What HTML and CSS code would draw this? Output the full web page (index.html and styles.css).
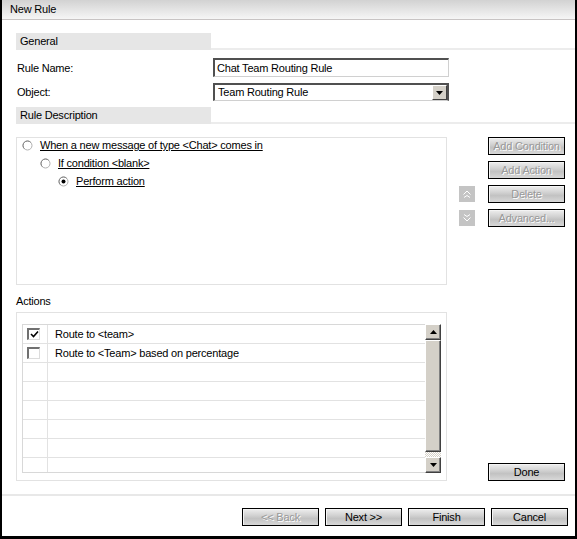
FILE: index.html
```html
<!DOCTYPE html>
<html>
<head>
<meta charset="utf-8">
<title>New Rule</title>
<link rel="stylesheet" href="styles.css">
</head>
<body>
<div class="window">
  <div class="titlebar">New Rule</div>
  <div class="content">
    <div class="section-head"><span class="section-label">General</span><span class="section-fill"></span></div>
    <div class="field-row row-name">
      <span class="field-label">Rule Name:</span>
      <div class="textbox">Chat Team Routing Rule</div>
    </div>
    <div class="field-row row-object">
      <span class="field-label">Object:</span>
      <div class="combo">
        <span class="combo-text">Team Routing Rule</span>
        <span class="combo-btn"><svg width="7" height="4" viewBox="0 0 7 4"><path d="M0 0H7L3.5 4Z" fill="#000"/></svg></span>
      </div>
    </div>
    <div class="section-head head-desc"><span class="section-label">Rule Description</span><span class="section-fill"></span></div>

    <div class="desc-row">
      <div class="desc-box">
        <div class="tree">
          <div class="tree-item lvl0">
            <svg class="radio" width="11" height="11" viewBox="0 0 11 11"><circle cx="5.5" cy="5.5" r="4.5" fill="#fff" stroke="#b0b0b0"/><path d="M2.3 8.7A4.5 4.5 0 0 1 8.7 2.3" fill="none" stroke="#808080"/></svg>
            <span class="tree-text">When a new message of type &lt;Chat&gt; comes in</span>
          </div>
          <div class="tree-item lvl1">
            <svg class="radio" width="11" height="11" viewBox="0 0 11 11"><circle cx="5.5" cy="5.5" r="4.5" fill="#fff" stroke="#b0b0b0"/><path d="M2.3 8.7A4.5 4.5 0 0 1 8.7 2.3" fill="none" stroke="#808080"/></svg>
            <span class="tree-text">If condition &lt;blank&gt;</span>
          </div>
          <div class="tree-item lvl2">
            <svg class="radio" width="11" height="11" viewBox="0 0 11 11"><circle cx="5.5" cy="5.5" r="4.5" fill="#fff" stroke="#b0b0b0"/><path d="M2.3 8.7A4.5 4.5 0 0 1 8.7 2.3" fill="none" stroke="#808080"/><circle cx="5.5" cy="5.5" r="2" fill="#000"/></svg>
            <span class="tree-text">Perform action</span>
          </div>
        </div>
      </div>
      <div class="arrows">
        <span class="arrow-btn"><svg width="16" height="16" viewBox="0 0 16 16"><path d="M4.5 8.5L8 5L11.5 8.5M5 11.5L8 9.5L11 11.5" fill="none" stroke="#fff" stroke-width="1"/></svg></span>
        <span class="arrow-btn"><svg width="16" height="16" viewBox="0 0 16 16"><path d="M5 4.5L8 6.5L11 4.5M4.5 7.5L8 11L11.5 7.5" fill="none" stroke="#fff" stroke-width="1"/></svg></span>
      </div>
      <div class="btn-col">
        <button class="btn disabled">Add Condition</button>
        <button class="btn disabled">Add Action</button>
        <button class="btn disabled">Delete</button>
        <button class="btn disabled">Advanced...</button>
      </div>
    </div>

    <div class="actions-label">Actions</div>
    <div class="actions-row">
      <div class="actions-box">
        <div class="grid-wrap">
          <div class="list">
            <div class="list-row"><span class="check-cell"><span class="checkbox"><svg width="9" height="9" viewBox="0 0 9 9"><path d="M1 4L3.5 6.5L8 1.5" fill="none" stroke="#000" stroke-width="1.6"/></svg></span></span><span class="text-cell">Route to &lt;team&gt;</span></div>
            <div class="list-row"><span class="check-cell"><span class="checkbox"></span></span><span class="text-cell">Route to &lt;Team&gt; based on percentage</span></div>
            <div class="list-row"><span class="check-cell"></span><span class="text-cell"></span></div>
            <div class="list-row"><span class="check-cell"></span><span class="text-cell"></span></div>
            <div class="list-row"><span class="check-cell"></span><span class="text-cell"></span></div>
            <div class="list-row"><span class="check-cell"></span><span class="text-cell"></span></div>
            <div class="list-row"><span class="check-cell"></span><span class="text-cell"></span></div>
            <div class="list-row"><span class="check-cell"></span><span class="text-cell"></span></div>
          </div>
          <div class="scrollbar">
            <span class="sb-btn"><svg width="7" height="4" viewBox="0 0 7 4"><path d="M0 4H7L3.5 0Z" fill="#000"/></svg></span>
            <span class="sb-thumb"></span>
            <span class="sb-track"></span>
            <span class="sb-btn"><svg width="7" height="4" viewBox="0 0 7 4"><path d="M0 0H7L3.5 4Z" fill="#000"/></svg></span>
          </div>
        </div>
      </div>
      <button class="btn done">Done</button>
    </div>
  </div>
  <div class="separator"></div>
  <div class="footer">
    <button class="btn disabled">&lt;&lt; Back</button>
    <button class="btn">Next &gt;&gt;</button>
    <button class="btn">Finish</button>
    <button class="btn">Cancel</button>
  </div>
</div>
</body>
</html>
```
FILE: styles.css
```css
html, body {
  margin: 0;
  padding: 0;
  background: #fff;
}
body {
  font-family: "Liberation Sans", Arial, sans-serif;
  font-size: 11px;
  letter-spacing: -0.2px;
  color: #000;
}
.window {
  width: 577px;
  height: 539px;
  box-sizing: border-box;
  border-left: 2px solid #000;
  border-right: 2px solid #000;
  border-bottom: 3px solid #000;
  background: #fff;
  display: flex;
  flex-direction: column;
}
.titlebar {
  height: 19px;
  line-height: 19px;
  padding-left: 8px;
  border-bottom: 1px solid #c8c4c4;
  background: linear-gradient(#d2d2d2, #f6f6f6);
}
.content {
  padding-left: 14px;
}
.section-head {
  display: flex;
  height: 17px;
  margin-top: 13px;
}
.head-desc {
  margin-top: 6px;
}
.section-label {
  width: 195px;
  box-sizing: border-box;
  padding-left: 4px;
  line-height: 17px;
  background: #e6e6e6;
}
.section-fill {
  flex: 1;
  box-sizing: border-box;
  border-bottom: 2px solid #ececec;
}
.field-row {
  display: flex;
  align-items: center;
}
.row-name {
  margin-top: 8px;
  height: 19px;
}
.row-object {
  margin-top: 6px;
  height: 18px;
}
.field-label {
  width: 197px;
  box-sizing: border-box;
  padding-left: 1px;
}
.textbox {
  width: 236px;
  height: 19px;
  box-sizing: border-box;
  border-top: 2px solid #505050;
  border-left: 2px solid #505050;
  border-right: 1px solid #d0d0d0;
  border-bottom: 1px solid #d0d0d0;
  padding-left: 2px;
  line-height: 16px;
}
.combo {
  width: 236px;
  height: 18px;
  box-sizing: border-box;
  border-top: 2px solid #505050;
  border-left: 2px solid #505050;
  border-right: 2px solid #505050;
  border-bottom: 1px solid #d0d0d0;
  display: flex;
  align-items: stretch;
}
.combo-text {
  flex: 1;
  padding-left: 3px;
  line-height: 15px;
}
.combo-btn {
  width: 15px;
  box-sizing: border-box;
  background: #d4d0c8;
  border-top: 1px solid #fff;
  border-left: 1px solid #fff;
  border-right: 1px solid #404040;
  border-bottom: 1px solid #404040;
  display: flex;
  align-items: center;
  justify-content: center;
}
.desc-row {
  display: flex;
  margin-top: 13px;
}
.desc-box {
  width: 431px;
  height: 148px;
  box-sizing: border-box;
  border: 1px solid #e2e2e2;
}
.tree {
  margin-top: -2px;
}
.tree-item {
  display: flex;
  align-items: center;
  height: 18px;
}
.lvl0 { padding-left: 5px; }
.lvl1 { padding-left: 23px; }
.lvl2 { padding-left: 41px; }
.radio {
  flex: none;
}
.tree-text {
  margin-left: 7px;
  text-decoration: underline;
}
.arrows {
  margin-left: 12px;
  width: 16px;
  padding-top: 49px;
  display: flex;
  flex-direction: column;
  gap: 8px;
}
.arrow-btn {
  width: 16px;
  height: 16px;
  background: #c4c4c4;
  display: block;
}
.arrow-btn svg { display: block; }
.btn-col {
  margin-left: 13px;
  display: flex;
  flex-direction: column;
  gap: 6px;
}
.btn {
  width: 77px;
  height: 18px;
  box-sizing: border-box;
  margin: 0;
  padding: 0;
  border: 1px solid #000;
  font-family: "Liberation Sans", Arial, sans-serif;
  font-size: 11px;
  letter-spacing: -0.2px;
  color: #000;
  background: linear-gradient(#eeeeee 0%, #d2d2d2 40%, #c2c2c2 60%, #d8d8d8 100%);
  box-shadow: inset 1px 1px 0 #f4f4f4;
  text-align: center;
  line-height: 15px;
}
.btn.disabled {
  color: #999999;
  text-shadow: 1px 1px 0 #fff;
}
.actions-label {
  margin-top: 10px;
  height: 13px;
  line-height: 13px;
}
.actions-row {
  display: flex;
  align-items: flex-end;
  margin-top: 4px;
}
.actions-box {
  width: 431px;
  height: 169px;
  box-sizing: border-box;
  border: 1px solid #e2e2e2;
  padding: 11px 0 0 5px;
}
.done {
  margin-left: 41px;
}
.grid-wrap {
  display: flex;
  width: 419px;
  height: 149px;
}
.list {
  width: 403px;
  height: 149px;
  box-sizing: border-box;
  border: 1px solid #d8d8d8;
  border-right: none;
  overflow: hidden;
}
.list-row {
  display: flex;
  height: 19px;
  box-sizing: border-box;
  border-bottom: 1px solid #e2e2e2;
}
.check-cell {
  width: 25px;
  flex: none;
  box-sizing: border-box;
  border-right: 1px solid #e2e2e2;
  display: flex;
  align-items: center;
  padding-left: 4px;
}
.checkbox {
  width: 13px;
  height: 12px;
  box-sizing: border-box;
  border-top: 2px solid #707070;
  border-left: 2px solid #707070;
  border-right: 1px solid #dcdcdc;
  border-bottom: 1px solid #dcdcdc;
  background: #fff;
  display: flex;
  align-items: center;
  justify-content: center;
}
.checkbox svg { display: block; }
.text-cell {
  padding-left: 7px;
  line-height: 18px;
}
.scrollbar {
  width: 16px;
  height: 149px;
  display: flex;
  flex-direction: column;
  background: #d4d0c8;
}
.sb-btn, .sb-thumb {
  box-sizing: border-box;
  background: #d4d0c8;
  border-top: 1px solid #fff;
  border-left: 1px solid #fff;
  border-right: 1px solid #404040;
  border-bottom: 1px solid #404040;
  box-shadow: inset -1px -1px 0 #808080;
}
.sb-btn {
  height: 16px;
  display: flex;
  align-items: center;
  justify-content: center;
}
.sb-btn svg { display: block; }
.sb-thumb {
  height: 112px;
}
.sb-track {
  height: 5px;
  background: repeating-conic-gradient(#fff 0 25%, #d4d0c8 0 50%) 0 0 / 2px 2px;
}
.separator {
  margin-top: 13px;
  height: 2px;
  background: #e8e8e8;
}
.footer {
  margin-top: 12px;
  display: flex;
  justify-content: flex-end;
  gap: 6px;
  padding-right: 7px;
}
```
